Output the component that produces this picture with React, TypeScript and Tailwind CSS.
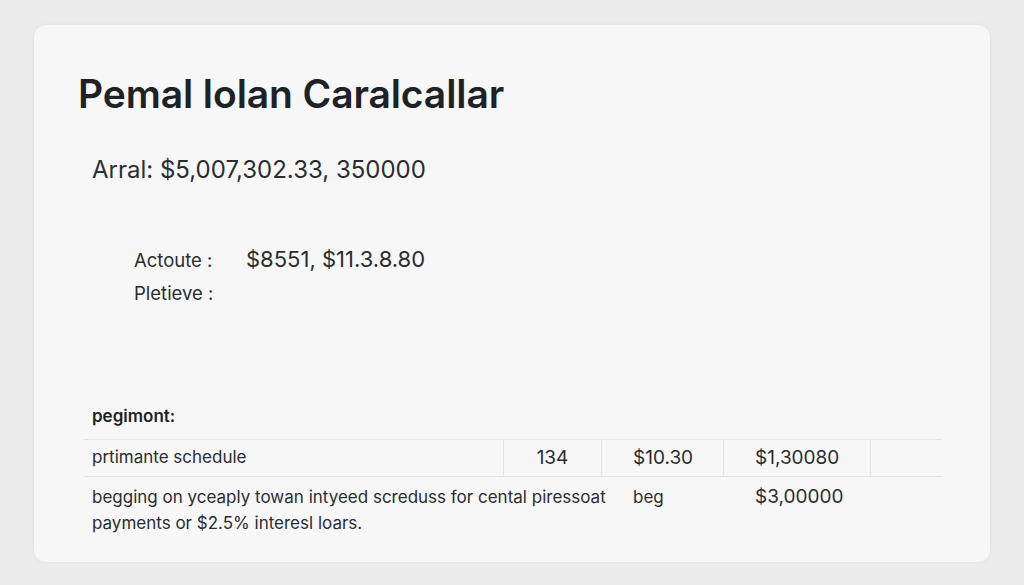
export default function App() {
  return (
    <div
      className="w-[1024px] h-[585px] bg-[#ececec] pt-[25px] pl-[34px]"
      style={{ fontFamily: "Inter, 'Noto Sans', sans-serif" }}
    >
      <div className="w-[956px] h-[537px] rounded-[12px] bg-[#f7f7f7] shadow-[0_0_4px_rgba(0,0,0,0.06)] flex flex-col">
        <h1 className="mt-[46px] ml-[44px] text-[39px] leading-[46px] font-semibold text-[#1e2226] tracking-[-0.1px]">
          Pemal lolan Caralcallar
        </h1>

        <div className="mt-[38px] ml-[58px] text-[24px] leading-[30px] text-[#2a2d31]">
          Arral: $5,007,302.33, 350000
        </div>

        <div className="mt-[59px] ml-[100px] flex flex-col text-[#2a2d31]">
          <div className="flex items-baseline">
            <span className="w-[112px] text-[18.5px] leading-[30px]">Actoute :</span>
            <span className="text-[22px] leading-[30px]">$8551, $11.3.8.80</span>
          </div>
          <div className="text-[18.5px] leading-[30px] mt-[3px]">Pletieve :</div>
        </div>

        <div className="mt-[97px] ml-[58px] text-[17px] leading-[22px] font-semibold text-[#1e2226]">
          pegimont:
        </div>

        <div className="mt-[12px] ml-[50px] w-[858px] text-[#2a2d31]">
          <div className="grid grid-cols-[419px_98px_122px_147px_72px] border-t border-b border-[#e4e4e4] h-[38px] items-stretch">
            <div className="pl-[8px] flex items-center text-[17px]">prtimante schedule</div>
            <div className="border-l border-[#e4e4e4] flex items-center justify-center text-[19px]">134</div>
            <div className="border-l border-[#e4e4e4] flex items-center pl-[31px] text-[19px]">$10.30</div>
            <div className="border-l border-[#e4e4e4] flex items-center pl-[31px] text-[19px]">$1,30080</div>
            <div className="border-l border-[#e4e4e4]"></div>
          </div>
          <div className="grid grid-cols-[541px_98px_147px_72px] pt-[7px]">
            <div className="pl-[8px] text-[17px] leading-[26px]">
              begging on yceaply towan intyeed screduss for cental piressoat payments or $2.5% interesl loars.
            </div>
            <div className="pl-[8px] text-[17px] leading-[26px]">beg</div>
            <div className="pl-[32px] text-[19px] leading-[26px]">$3,00000</div>
            <div></div>
          </div>
        </div>
      </div>
    </div>
  );
}
